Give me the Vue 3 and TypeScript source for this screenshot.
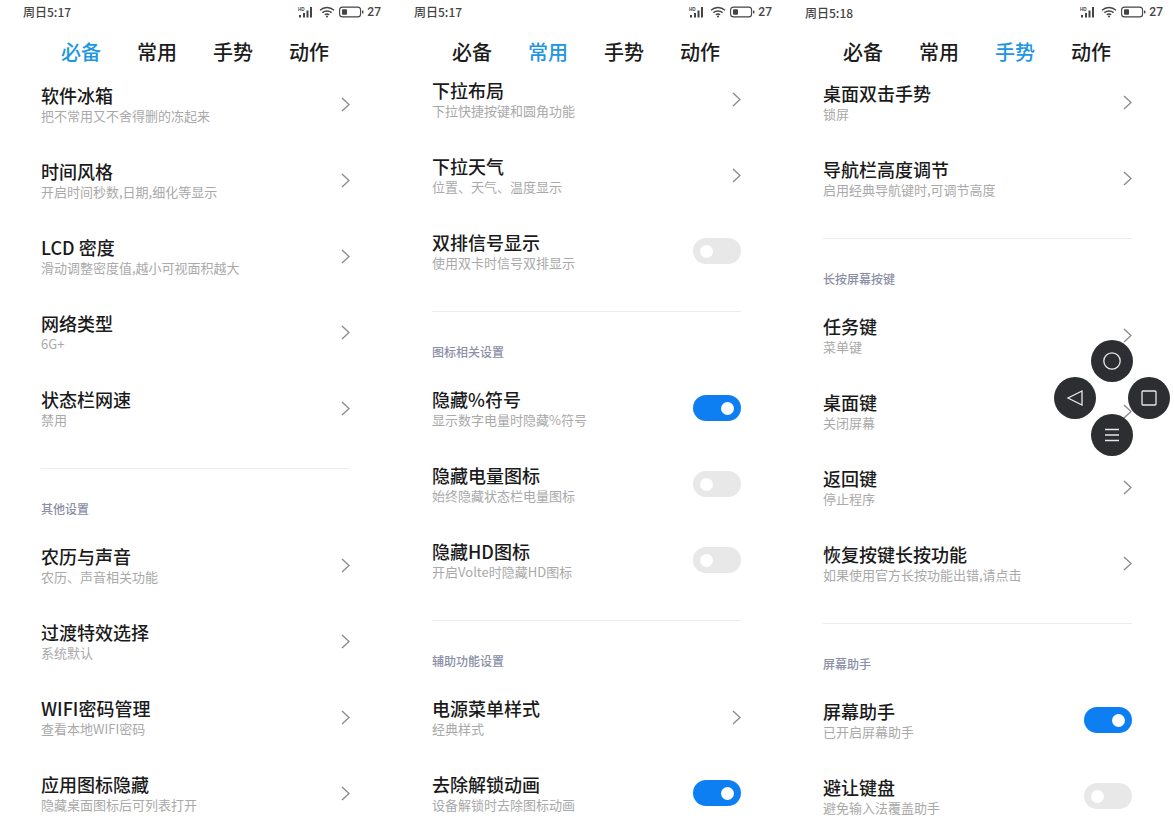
<script setup lang="ts">
type Row = { title: string; sub: string; toggle?: boolean };
type Block = { label?: string; rows: Row[] };
type Panel = { cls: string; time: string; active: number; blocks: Block[] };

const tabs = ["必备", "常用", "手势", "动作"];

const panels: Panel[] = [
  {
    cls: "first",
    time: "周日5:17",
    active: 0,
    blocks: [
      {
        rows: [
          { title: "软件冰箱", sub: "把不常用又不舍得删的冻起来" },
          { title: "时间风格", sub: "开启时间秒数,日期,细化等显示" },
          { title: "LCD 密度", sub: "滑动调整密度值,越小可视面积越大" },
          { title: "网络类型", sub: "6G+" },
          { title: "状态栏网速", sub: "禁用" },
        ],
      },
      {
        label: "其他设置",
        rows: [
          { title: "农历与声音", sub: "农历、声音相关功能" },
          { title: "过渡特效选择", sub: "系统默认" },
          { title: "WIFI密码管理", sub: "查看本地WIFI密码" },
          { title: "应用图标隐藏", sub: "隐藏桌面图标后可列表打开" },
        ],
      },
    ],
  },
  {
    cls: "second",
    time: "周日5:17",
    active: 1,
    blocks: [
      {
        rows: [
          { title: "下拉布局", sub: "下拉快捷按键和圆角功能" },
          { title: "下拉天气", sub: "位置、天气、温度显示" },
          { title: "双排信号显示", sub: "使用双卡时信号双排显示", toggle: false },
        ],
      },
      {
        label: "图标相关设置",
        rows: [
          { title: "隐藏%符号", sub: "显示数字电量时隐藏%符号", toggle: true },
          { title: "隐藏电量图标", sub: "始终隐藏状态栏电量图标", toggle: false },
          { title: "隐藏HD图标", sub: "开启Volte时隐藏HD图标", toggle: false },
        ],
      },
      {
        label: "辅助功能设置",
        rows: [
          { title: "电源菜单样式", sub: "经典样式" },
          { title: "去除解锁动画", sub: "设备解锁时去除图标动画", toggle: true },
        ],
      },
    ],
  },
  {
    cls: "third",
    time: "周日5:18",
    active: 2,
    blocks: [
      {
        rows: [
          { title: "桌面双击手势", sub: "锁屏" },
          { title: "导航栏高度调节", sub: "启用经典导航键时,可调节高度" },
        ],
      },
      {
        label: "长按屏幕按键",
        rows: [
          { title: "任务键", sub: "菜单键" },
          { title: "桌面键", sub: "关闭屏幕" },
          { title: "返回键", sub: "停止程序" },
          { title: "恢复按键长按功能", sub: "如果使用官方长按功能出错,请点击" },
        ],
      },
      {
        label: "屏幕助手",
        rows: [
          { title: "屏幕助手", sub: "已开启屏幕助手", toggle: true },
          { title: "避让键盘", sub: "避免输入法覆盖助手", toggle: false },
        ],
      },
    ],
  },
];
</script>

<template>
  <div class="screen">
    <section v-for="p in panels" :key="p.cls" class="panel" :class="p.cls">
      <header class="status">
        <span class="time">{{ p.time }}</span>
        <span class="status-right">
          <svg class="sig" width="17" height="12" viewBox="0 0 17 12">
            <text x="0" y="4.5" font-size="4.6" font-family="Liberation Sans, sans-serif" font-weight="700" fill="#444">HD</text>
            <rect x="1" y="9" width="2" height="2.5" fill="#444" />
            <rect x="5" y="7" width="2" height="4.5" fill="#444" />
            <rect x="8.5" y="4.5" width="2" height="7" fill="#444" />
            <rect x="12" y="1" width="2" height="10.5" fill="#444" />
          </svg>
          <svg class="wifi" width="16" height="12" viewBox="0 0 16 12" fill="none" stroke="#444" stroke-width="1.4">
            <path d="M1 4.2 C5 .6 11 .6 15 4.2" />
            <path d="M3.4 6.6 C6 4.4 10 4.4 12.6 6.6" />
            <path d="M5.8 8.8 C7 7.9 9 7.9 10.2 8.8" />
            <circle cx="8" cy="10.6" r="1" fill="#444" stroke="none" />
          </svg>
          <svg class="batt" width="25" height="12" viewBox="0 0 25 12">
            <rect x=".6" y="1.1" width="21" height="9.8" rx="3" fill="none" stroke="#444" stroke-width="1.1" />
            <rect x="3" y="3.2" width="5" height="5.6" rx="1" fill="#444" />
            <rect x="23" y="4.6" width="1.4" height="2.8" fill="#444" />
          </svg>
          <span class="level">27</span>
        </span>
      </header>

      <nav class="tabs">
        <span v-for="(t, i) in tabs" :key="t" class="tab" :class="{ active: i === p.active }">{{ t }}</span>
      </nav>

      <div class="list">
        <div v-for="(b, bi) in p.blocks" :key="bi" class="block">
          <div v-if="b.label" class="section">
            <div class="line"></div>
            <div class="label">{{ b.label }}</div>
          </div>
          <div v-for="r in b.rows" :key="r.title" class="row">
            <div class="texts">
              <div class="title">{{ r.title }}</div>
              <div class="sub">{{ r.sub }}</div>
            </div>
            <span v-if="r.toggle !== undefined" class="switch" :class="{ on: r.toggle }"><i class="knob"></i></span>
            <svg v-else class="chev" width="9" height="15" viewBox="0 0 9 15" fill="none" stroke="#8a8a8a" stroke-width="1.3">
              <path d="M1 1 L8 7.5 L1 14" />
            </svg>
          </div>
        </div>
      </div>
    </section>

    <div class="assist">
      <button class="ball top" aria-label="主页">
        <svg width="20" height="20" viewBox="0 0 20 20" fill="none" stroke="#e8e8e8" stroke-width="1.3"><circle cx="10" cy="10" r="8.2" /></svg>
      </button>
      <button class="ball left" aria-label="返回">
        <svg width="18" height="18" viewBox="0 0 18 18" fill="none" stroke="#e8e8e8" stroke-width="1.3"><path d="M16 2 V16 L2 9 Z" /></svg>
      </button>
      <button class="ball right" aria-label="任务">
        <svg width="18" height="18" viewBox="0 0 18 18" fill="none" stroke="#e8e8e8" stroke-width="1.3"><rect x="2" y="2" width="14" height="14" rx="1" /></svg>
      </button>
      <button class="ball bottom" aria-label="菜单">
        <svg width="18" height="16" viewBox="0 0 18 16" fill="none" stroke="#e8e8e8" stroke-width="1.3"><path d="M2 2.5 H16 M2 8 H16 M2 13.5 H16" /></svg>
      </button>
    </div>
  </div>
</template>

<style>
html, body { background: #fff; overflow: hidden; }
</style>

<style scoped>
.screen {
  position: relative;
  display: flex;
  width: 1174px;
  height: 816px;
  overflow: hidden;
  background: #fff;
  font-family: "Noto Sans CJK SC", "Noto Sans", sans-serif;
  color: #1c1c1c;
}
.panel {
  flex: 0 0 391px;
  height: 816px;
  overflow: hidden;
}
.status {
  display: flex;
  justify-content: space-between;
  align-items: center;
  height: 24px;
  padding: 0 10px 0 23px;
  color: #444;
}
.time { font-size: 12px; font-weight: 500; line-height: 24px; }
.third .time { padding-top: 2px; }
.status-right { display: flex; align-items: center; gap: 4px; }
.level { font-size: 12px; font-weight: 500; margin-left: -1px; font-family: "Roboto", sans-serif; }
.tabs {
  display: flex;
  gap: 36px;
  height: 36px;
  margin-top: 10px;
  padding-left: 61px;
  align-items: center;
}
.tab { font-size: 20px; font-weight: 500; line-height: 36px; width: 40px; white-space: nowrap; }
.tab.active { color: #2196e0; }
.list { padding: 0 41px; }
.first .list { margin-top: -4px; }
.second .list { margin-top: -9px; }
.third .list { margin-top: -6px; }
.row {
  display: flex;
  align-items: center;
  justify-content: space-between;
  height: 76px;
}
.title { font-size: 18px; font-weight: 500; line-height: 24px; color: #1a1a1a; white-space: nowrap; }
.sub { font-size: 13px; line-height: 18px; margin-bottom: 1px; color: #a9a9a9; white-space: nowrap; }
.chev { flex: none; }
.section { padding-top: 22px; padding-bottom: 9px; }
.line { height: 1px; background: #ececec; }
.label {
  margin-top: 31px;
  height: 18px;
  font-size: 12px;
  font-weight: 500;
  line-height: 18px;
  color: #8b8fa6;
}
.switch {
  flex: none;
  display: flex;
  align-items: center;
  width: 48px;
  height: 26px;
  padding: 0 7px;
  box-sizing: border-box;
  border-radius: 13px;
  background: #e8e8e8;
}
.switch.on { background: #0d7ff2; justify-content: flex-end; }
.knob { display: block; width: 13px; height: 13px; border-radius: 50%; background: #fff; }
.assist { position: absolute; left: 1054px; top: 340px; width: 116px; height: 116px; }
.ball {
  position: absolute;
  display: flex;
  align-items: center;
  justify-content: center;
  width: 42px;
  height: 42px;
  padding: 0;
  border: 0;
  border-radius: 50%;
  background: #2c2e31;
}
.top { left: 37px; top: 0; }
.left { left: 0; top: 37px; }
.right { left: 74px; top: 37px; }
.bottom { left: 37px; top: 74px; }
</style>
